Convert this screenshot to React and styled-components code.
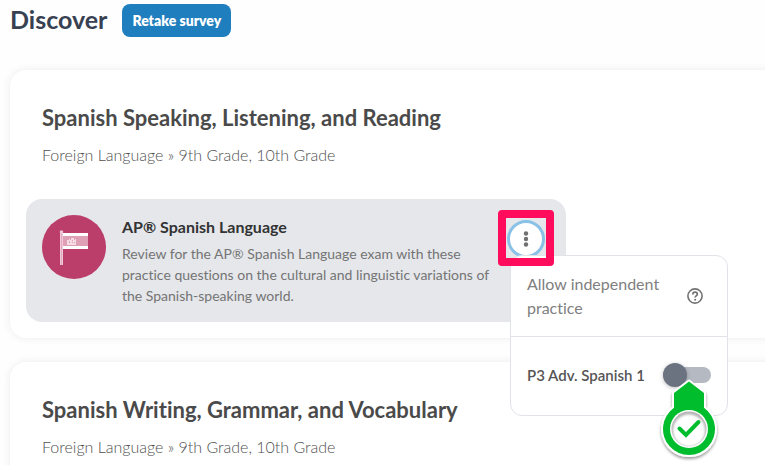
import React, { useState } from "react";
import styled, { createGlobalStyle } from "styled-components";

const GlobalStyle = createGlobalStyle`
  *, *::before, *::after { box-sizing: border-box; }
  body {
    margin: 0;
    overflow: hidden;
    background: #fefefe;
    font-family: Lato, "Noto Sans", sans-serif;
    font-size: 16px;
    line-height: 24px;
    font-variant-ligatures: none;
    color: #505050;
  }
  h1, h2, h3, p { margin: 0; }
  button { font: inherit; cursor: pointer; }
`;

const Page = styled.main`
  height: 100vh;
  overflow: hidden;
  padding: 4px 0 0 10px;
`;

const PageHeader = styled.header`
  display: flex;
  align-items: flex-start;
  gap: 15px;
  margin-bottom: 33px;
`;

const PageTitle = styled.h1`
  font-size: 25px;
  line-height: 30px;
  font-weight: 700;
  color: #374151;
`;

const SurveyButton = styled.button`
  height: 33px;
  padding: 0 10px;
  border: 0;
  border-radius: 8px;
  background: #1f7ebd;
  color: #fff;
  font-size: 14px;
  font-weight: 800;
  line-height: 20px;
`;

const CardList = styled.div`
  display: grid;
  gap: 24px;
  margin-right: -32px;
`;

const Card = styled.section`
  padding: 32px 16px 16px;
  border-radius: 16px;
  background: #fff;
  box-shadow: 0 0 8px rgba(0, 0, 0, 0.08);
`;

const CardHeading = styled.div`
  display: grid;
  gap: 8px;
  padding: 0 16px 31px;
`;

const CardTitle = styled.h2`
  font-size: 22px;
  line-height: 32px;
  font-weight: 700;
  color: #4a4a4a;
`;

const GradeLine = styled.p`
  line-height: 26px;
  font-weight: 300;
`;

const Item = styled.article`
  position: relative;
  display: flex;
  gap: 16px;
  max-width: 540px;
  padding: 16px 20px 16px 16px;
  border-radius: 16px;
  background: #e5e7eb;
`;

const Badge = styled.div`
  flex: none;
  width: 64px;
  height: 64px;
  border-radius: 50%;
  background: #bb3d69;
  svg { display: block; }
`;

const ItemText = styled.div`
  flex: 1;
`;

const ItemTitle = styled.h3`
  margin-bottom: 4px;
  font-size: 16px;
  line-height: 24px;
  font-weight: 700;
  color: #333;
`;

const ItemDescription = styled.p`
  font-size: 14px;
  line-height: 21px;
  color: #747474;
`;

const MenuAnchor = styled.div`
  position: relative;
  display: flex;
  justify-content: center;
  align-items: flex-start;
  flex: none;
  width: 40px;
`;

const MenuButton = styled.button`
  display: grid;
  place-items: center;
  width: 38px;
  height: 38px;
  margin-top: 5px;
  padding: 0;
  border: 3px solid #8ac1e6;
  border-radius: 50%;
  background: #fff;
`;

const Menu = styled.div`
  position: absolute;
  z-index: 1;
  top: 40px;
  left: 4px;
  width: 218px;
  border: 1px solid #e1e3e8;
  border-radius: 12px;
  background: #fff;
`;

const MenuHeader = styled.div`
  display: flex;
  align-items: center;
  justify-content: space-between;
  padding: 16px 24px 16px 16px;
  border-bottom: 1px solid #e1e3e8;
  color: #808080;
`;

const MenuCaption = styled.p`
  max-width: 144px;
`;

const HelpButton = styled.button`
  padding: 0;
  border: 0;
  background: none;
  color: #737373;
  svg { display: block; }
`;

const MenuRow = styled.label`
  display: flex;
  align-items: center;
  justify-content: space-between;
  height: 78px;
  padding: 0 16px 2px;
  font-size: 15px;
  font-weight: 600;
  color: #555;
`;

const SwitchHolder = styled.span`
  position: relative;
  display: flex;
`;

const Switch = styled.input`
  appearance: none;
  display: flex;
  align-items: center;
  width: 48px;
  height: 16px;
  margin: 0;
  border-radius: 8px;
  background: #b5b9c1;
  &::before {
    content: "";
    flex: none;
    width: 24px;
    height: 24px;
    border-radius: 50%;
    background: #6b7280;
    box-shadow: 0 1px 4px rgba(0, 0, 0, 0.25);
  }
  &:checked { justify-content: flex-end; }
`;

const Highlight = styled.div`
  position: absolute;
  z-index: 2;
  top: -5px;
  left: -8px;
  width: 56px;
  height: 56px;
  border: 8px solid #ff0d5c;
  border-radius: 4px;
  pointer-events: none;
`;

const Pointer = styled.svg`
  position: absolute;
  z-index: 3;
  top: 7px;
  left: -6px;
  overflow: visible;
  pointer-events: none;
`;

const FlagIcon = () => (
  <svg width="64" height="64" viewBox="0 0 64 64" aria-hidden="true">
    <path d="M21 18h25v16H21z" fill="#fff" />
    <path d="M21 21h25v10H21z" fill="#dfa0b6" />
    <path d="M18 17h3v33h-3z" fill="#f0c9d6" />
    <path d="M19 17h1v33h-1z" fill="#e3a8bd" />
    <circle cx="19.5" cy="17" r="1.8" fill="#efc6d4" />
    <path d="M25 25h2v-1h1v1h1v-2h3v2h1v-1h1v6h-9z" fill="#f5dbe4" />
    <path d="M27 26h1v2h-1zM30 25h1v1h-1zM30 27h1v1h-1zM32 27h1v1h-1z" fill="#dfa0b6" />
  </svg>
);

const DotsIcon = () => (
  <svg width="6" height="18" viewBox="0 0 6 18" fill="#707070" aria-hidden="true">
    <circle cx="3" cy="3.5" r="2.2" />
    <circle cx="3" cy="9" r="2.2" />
    <circle cx="3" cy="14.5" r="2.2" />
  </svg>
);

const HelpIcon = () => (
  <svg width="16" height="16" viewBox="0 0 16 16" fill="none" stroke="currentColor" aria-hidden="true">
    <circle cx="8" cy="8" r="7.1" strokeWidth="1.6" />
    <path d="M5.8 6.4c0-1.4 1-2.2 2.3-2.2s2.2.8 2.2 2c0 1.6-2.2 1.7-2.2 3.3" strokeWidth="1.7" />
    <circle cx="8.1" cy="11.7" r="1" fill="currentColor" stroke="none" />
  </svg>
);

const CheckPointer = () => (
  <Pointer width="64" height="84" viewBox="0 0 64 84" aria-hidden="true">
    <defs>
      <filter id="pointerShadow" x="-20%" y="-20%" width="140%" height="140%">
        <feDropShadow dx="0" dy="2" stdDeviation="1.5" floodOpacity="0.4" />
      </filter>
      <filter id="rimShadow" x="-20%" y="-20%" width="140%" height="140%">
        <feGaussianBlur stdDeviation="1" />
      </filter>
    </defs>
    <g filter="url(#pointerShadow)">
      <path
        d="M32 7.5L47 19V33.8A26 26 0 1 1 17 33.8V19Z"
        fill="#00bd2f"
        stroke="#fff"
        strokeWidth="4"
        paintOrder="stroke"
        strokeLinejoin="round"
      />
    </g>
    <circle cx="32" cy="55" r="19" fill="#fff" />
    <circle cx="32" cy="55" r="17.5" fill="#b4b4b4" />
    <circle cx="32" cy="56.5" r="16" fill="#fff" filter="url(#rimShadow)" />
    <path d="M22.5 54.5l6.5 6.5 12.5-13" fill="none" stroke="#00bd2f" strokeWidth="4" strokeLinecap="round" />
  </Pointer>
);

function PracticeMenu() {
  const [open, setOpen] = useState(true);
  const [allowed, setAllowed] = useState(false);
  return (
    <MenuAnchor>
      <MenuButton aria-label="Practice options" aria-expanded={open} onClick={() => setOpen(!open)}>
        <DotsIcon />
      </MenuButton>
      <Highlight />
      {open && (
        <Menu>
          <MenuHeader>
            <MenuCaption>Allow independent practice</MenuCaption>
            <HelpButton aria-label="Help"><HelpIcon /></HelpButton>
          </MenuHeader>
          <MenuRow>
            P3 Adv. Spanish 1
            <SwitchHolder>
              <Switch type="checkbox" role="switch" checked={allowed} onChange={(e) => setAllowed(e.target.checked)} />
              <CheckPointer />
            </SwitchHolder>
          </MenuRow>
        </Menu>
      )}
    </MenuAnchor>
  );
}

function SubjectCard({ title, children }) {
  return (
    <Card>
      <CardHeading>
        <CardTitle>{title}</CardTitle>
        <GradeLine>Foreign Language » 9th Grade, 10th Grade</GradeLine>
      </CardHeading>
      {children}
    </Card>
  );
}

export default function App() {
  return (
    <>
      <GlobalStyle />
      <Page>
        <PageHeader>
          <PageTitle>Discover</PageTitle>
          <SurveyButton>Retake survey</SurveyButton>
        </PageHeader>
        <CardList>
          <SubjectCard title="Spanish Speaking, Listening, and Reading">
            <Item>
              <Badge><FlagIcon /></Badge>
              <ItemText>
                <ItemTitle>AP® Spanish Language</ItemTitle>
                <ItemDescription>
                  Review for the AP® Spanish Language exam with these practice questions on the cultural and
                  linguistic variations of the Spanish-speaking world.
                </ItemDescription>
              </ItemText>
              <PracticeMenu />
            </Item>
          </SubjectCard>
          <SubjectCard title="Spanish Writing, Grammar, and Vocabulary" />
        </CardList>
      </Page>
    </>
  );
}
